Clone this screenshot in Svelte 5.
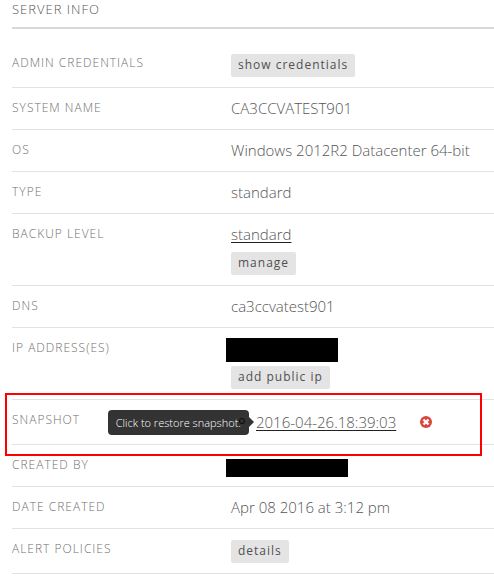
<script>
  const rows = [
    { label: 'Admin Credentials', button: 'show credentials' },
    { label: 'System Name', text: 'CA3CCVATEST901' },
    { label: 'OS', text: 'Windows 2012R2 Datacenter 64-bit' },
    { label: 'Type', text: 'standard' },
    { label: 'Backup Level', link: 'standard', button: 'manage' },
    { label: 'DNS', text: 'ca3ccvatest901' },
    { label: 'IP Address(es)', redacted: 'ip', button: 'add public ip' },
    { label: 'Snapshot', snapshot: '2016-04-26.18:39:03' },
    { label: 'Created By', redacted: 'user' },
    { label: 'Date Created', text: 'Apr 08 2016 at 3:12 pm' },
    { label: 'Alert Policies', button: 'details' }
  ];
</script>

<section class="info">
  <h2>Server Info</h2>
  <dl>
    {#each rows as row}
      <div class="row" class:marked={row.snapshot}>
        <dt>{row.label}</dt>
        <dd>
          {#if row.text}<span class="value">{row.text}</span>{/if}
          {#if row.link}<a class="value" href="#backup">{row.link}</a>{/if}
          {#if row.redacted}<span class="redacted {row.redacted}"></span>{/if}
          {#if row.snapshot}
            <div class="snapshot">
              <a class="value" href="#restore">{row.snapshot}</a>
              <button class="remove" aria-label="Delete snapshot">
                <svg viewBox="0 0 12 12" aria-hidden="true">
                  <circle cx="6" cy="6" r="6" fill="#dc453b" />
                  <path d="M3.5 3.5 8.5 8.5M8.5 3.5 3.5 8.5" stroke="#fff" stroke-width="2.4" />
                </svg>
              </button>
              <span class="tooltip" role="tooltip">Click to restore snapshot.</span>
              <svg class="restore" viewBox="0 0 8 8" aria-hidden="true">
                <circle cx="4" cy="4" r="2.5" fill="none" stroke="#111" stroke-width="1.2" />
              </svg>
            </div>
          {/if}
          {#if row.button}<button class="action">{row.button}</button>{/if}
        </dd>
      </div>
    {/each}
  </dl>
</section>

<style>
  :global(body) {
    margin: 0;
    background: #fff;
  }
  .info {
    padding-left: 12px;
    font-family: 'Open Sans', 'Noto Sans', sans-serif;
    font-weight: 300;
    color: #555;
  }
  h2 {
    margin: 0;
    height: 27px;
    border-bottom: 2px solid #d9d9d9;
    font-size: 13px;
    line-height: 18px;
    font-weight: 300;
    letter-spacing: 1px;
    text-transform: uppercase;
    color: #555;
  }
  dl {
    margin: 14px 0 0;
  }
  .row {
    position: relative;
    display: flex;
    padding: 10px 0;
    border-bottom: 1px solid #e2e2e2;
  }
  dt {
    flex: 0 0 219px;
    font-size: 12px;
    line-height: 20px;
    letter-spacing: 1px;
    text-transform: uppercase;
    color: #707070;
  }
  dd {
    flex: 1;
    min-width: 0;
    margin: 0;
    display: flex;
    flex-direction: column;
    align-items: flex-start;
    gap: 6px;
  }
  .value {
    font-size: 15px;
    line-height: 21px;
    color: #555;
    white-space: nowrap;
  }
  a.value {
    text-decoration: underline #222;
    text-decoration-thickness: 1px;
    text-underline-offset: 2px;
  }
  .action {
    height: 23px;
    margin: 1px 0 0;
    padding: 0 7px;
    border: 0;
    border-radius: 2px;
    background: #e4e4e4;
    font-family: inherit;
    font-size: 12px;
    line-height: 21px;
    font-weight: 400;
    letter-spacing: 1px;
    color: #505050;
    display: flex;
  }
  .redacted {
    display: block;
    margin-left: -5px;
    background: #000;
  }
  .ip {
    width: 112px;
    height: 24px;
    margin-bottom: -3px;
  }
  .user {
    width: 122px;
    height: 18px;
    margin-top: 4px;
    margin-bottom: -1px;
  }
  .snapshot {
    position: relative;
    display: flex;
    align-items: center;
    height: 24px;
    padding-left: 25px;
  }
  .restore {
    position: absolute;
    left: 7px;
    top: 7px;
    width: 8px;
    height: 8px;
  }
  .remove {
    width: 12px;
    height: 12px;
    margin: 0 0 0 24px;
    padding: 0;
    border: 0;
    background: none;
    display: flex;
  }
  .remove svg {
    width: 12px;
    height: 12px;
  }
  .tooltip {
    position: absolute;
    right: calc(100% - 18px);
    top: 0;
    padding: 0 8px;
    border-radius: 4px;
    background: #333;
    font-size: 11px;
    line-height: 25px;
    font-weight: 300;
    color: #fff;
    white-space: nowrap;
  }
  .tooltip::after {
    content: '';
    position: absolute;
    left: 100%;
    top: 7px;
    border: 5px solid transparent;
    border-right: 0;
    border-left-color: #333;
  }
  .marked::after {
    content: '';
    position: absolute;
    inset: -7px 12px -12px -7px;
    border: 2px solid #f00;
    pointer-events: none;
  }
</style>
